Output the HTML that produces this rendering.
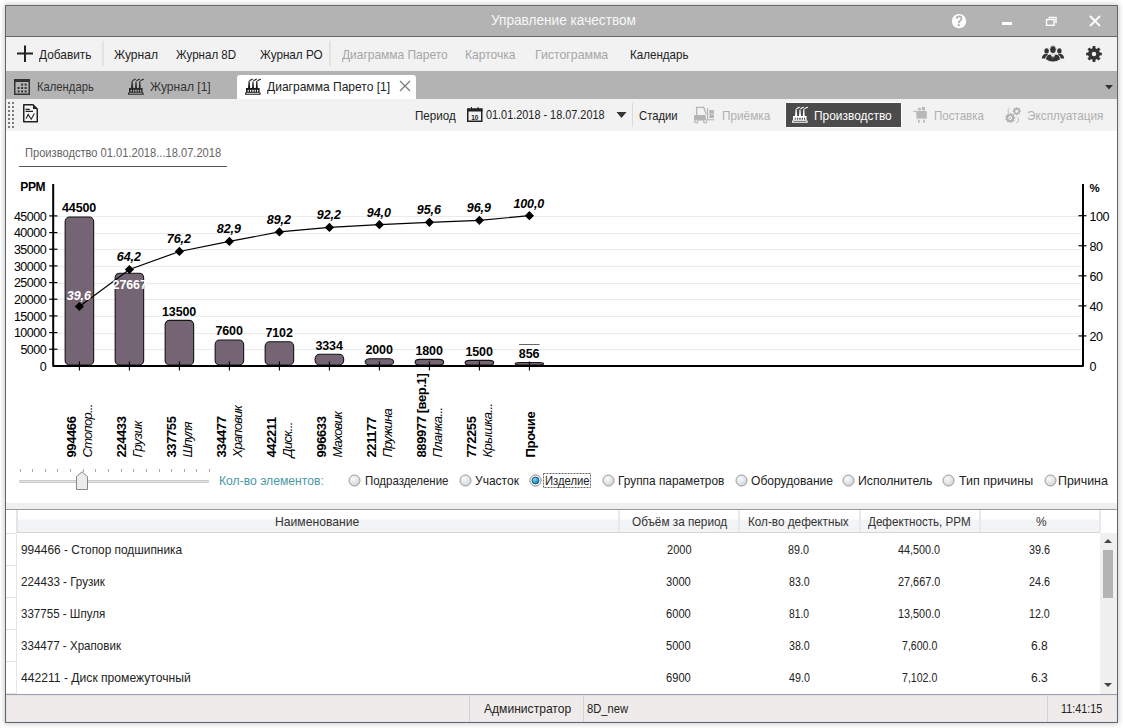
<!DOCTYPE html>
<html><head><meta charset="utf-8"><title>Управление качеством</title>
<style>
html,body{margin:0;padding:0;width:1123px;height:728px;overflow:hidden;background:#fff;position:relative}
body{font-family:"Liberation Sans",sans-serif}
.t{position:absolute;white-space:nowrap}
</style></head><body>
<div style="position:absolute;left:5px;top:5px;width:1113px;height:718px;box-shadow:0 0 5px 1px rgba(0,0,0,0.2);background:#fff;box-sizing:border-box;border:1px solid #666"></div>
<div style="position:absolute;left:6px;top:6px;width:1111px;height:30px;background:#b3b3b3"></div>
<div style="position:absolute;left:6px;top:36px;width:1111px;height:1px;background:#666"></div>
<div style="position:absolute;left:6px;top:37px;width:1111px;height:34px;background:#f2f2f2"></div>
<div style="position:absolute;left:101.5px;top:41px;width:2px;height:25px;background:#e3e3e3"></div>
<div style="position:absolute;left:328.5px;top:41px;width:2px;height:25px;background:#e3e3e3"></div>
<div style="position:absolute;left:6px;top:71px;width:1111px;height:28px;background:#b3b3b3"></div>
<div style="position:absolute;left:237px;top:75px;width:179px;height:24px;background:#fff;border-radius:3px 3px 0 0"></div>
<div style="position:absolute;left:6px;top:99px;width:1111px;height:32px;background:#f2f2f2"></div>
<div style="position:absolute;left:632px;top:103px;width:1px;height:24px;background:#dadada"></div>
<div style="position:absolute;left:786px;top:103px;width:115px;height:24px;background:#4b4b4b;box-shadow:0 0 0 1px #fdfdfd"></div>
<div style="position:absolute;left:8px;top:102px;width:2px;height:2px;background:#7a7a7a"></div><div style="position:absolute;left:12px;top:102px;width:2px;height:2px;background:#7a7a7a"></div><div style="position:absolute;left:8px;top:106px;width:2px;height:2px;background:#7a7a7a"></div><div style="position:absolute;left:12px;top:106px;width:2px;height:2px;background:#7a7a7a"></div><div style="position:absolute;left:8px;top:110px;width:2px;height:2px;background:#7a7a7a"></div><div style="position:absolute;left:12px;top:110px;width:2px;height:2px;background:#7a7a7a"></div><div style="position:absolute;left:8px;top:114px;width:2px;height:2px;background:#7a7a7a"></div><div style="position:absolute;left:12px;top:114px;width:2px;height:2px;background:#7a7a7a"></div><div style="position:absolute;left:8px;top:118px;width:2px;height:2px;background:#7a7a7a"></div><div style="position:absolute;left:12px;top:118px;width:2px;height:2px;background:#7a7a7a"></div><div style="position:absolute;left:8px;top:122px;width:2px;height:2px;background:#7a7a7a"></div><div style="position:absolute;left:12px;top:122px;width:2px;height:2px;background:#7a7a7a"></div><div style="position:absolute;left:8px;top:126px;width:2px;height:2px;background:#7a7a7a"></div><div style="position:absolute;left:12px;top:126px;width:2px;height:2px;background:#7a7a7a"></div>
<div style="position:absolute;left:19px;top:166px;width:208px;height:1px;background:#555"></div>
<div style="position:absolute;left:6px;top:503px;width:1111px;height:6px;background:#efefef"></div>
<div style="position:absolute;left:6px;top:509px;width:1111px;height:1px;background:#999"></div>
<div style="position:absolute;left:17px;top:510px;width:1083px;height:22px;background:linear-gradient(#ffffff 0,#ffffff 9px,#f3f4f6 10px,#f3f4f6 100%)"></div>
<div style="position:absolute;left:6px;top:532px;width:1094px;height:1px;background:#d5d5d5"></div>
<div style="position:absolute;left:17px;top:510px;width:1px;height:22px;background:#e3e3e3"></div>
<div style="position:absolute;left:618px;top:510px;width:2px;height:22px;background:#e9e9e9"></div>
<div style="position:absolute;left:738px;top:510px;width:2px;height:22px;background:#e9e9e9"></div>
<div style="position:absolute;left:859px;top:510px;width:2px;height:22px;background:#e9e9e9"></div>
<div style="position:absolute;left:979px;top:510px;width:2px;height:22px;background:#e9e9e9"></div>
<div style="position:absolute;left:1099px;top:510px;width:2px;height:22px;background:#e9e9e9"></div>
<div style="position:absolute;left:6px;top:510px;width:11px;height:184px;background:#fff"></div>
<div style="position:absolute;left:16px;top:510px;width:1px;height:184px;background:#e6e6e6"></div>
<div style="position:absolute;left:6px;top:533px;width:10px;height:1px;background:#e2e2e2"></div>
<div style="position:absolute;left:6px;top:565px;width:10px;height:1px;background:#e2e2e2"></div>
<div style="position:absolute;left:6px;top:597px;width:10px;height:1px;background:#e2e2e2"></div>
<div style="position:absolute;left:6px;top:629px;width:10px;height:1px;background:#e2e2e2"></div>
<div style="position:absolute;left:6px;top:661px;width:10px;height:1px;background:#e2e2e2"></div>
<div style="position:absolute;left:6px;top:693px;width:10px;height:1px;background:#e2e2e2"></div>
<div style="position:absolute;left:1100px;top:533px;width:17px;height:161px;background:#f0f0f0"></div>
<div style="position:absolute;left:1103px;top:550px;width:10px;height:48px;background:#b4b4b4"></div>
<svg style="position:absolute;left:1103px;top:538px" width="10" height="6"><path d="M1 5 L5 1 L9 5Z" fill="#444"/></svg>
<svg style="position:absolute;left:1103px;top:682px" width="10" height="6"><path d="M1 1 L5 5 L9 1Z" fill="#444"/></svg>
<div style="position:absolute;left:6px;top:694px;width:1111px;height:1px;background:#a0a0a0"></div>
<div style="position:absolute;left:6px;top:695px;width:1111px;height:27px;background:#efebea;box-shadow:inset 0 0 0 1px #dfe5f0"></div>
<div style="position:absolute;left:469px;top:695px;width:1px;height:27px;background:#d3d3de"></div>
<div style="position:absolute;left:583px;top:695px;width:1px;height:27px;background:#d3d3de"></div>
<div style="position:absolute;left:1047px;top:695px;width:1px;height:27px;background:#d3d3de"></div>
<div style="position:absolute;left:19px;top:480px;width:190px;height:3px;background:#e6e6e6;border-radius:2px;box-shadow:inset 0 0 0 1px #c9c9c9"></div>
<div style="position:absolute;left:20px;top:469px;width:1px;height:3px;background:#a8a8a8"></div>
<div style="position:absolute;left:32px;top:469px;width:1px;height:3px;background:#a8a8a8"></div>
<div style="position:absolute;left:45px;top:469px;width:1px;height:3px;background:#a8a8a8"></div>
<div style="position:absolute;left:57px;top:469px;width:1px;height:3px;background:#a8a8a8"></div>
<div style="position:absolute;left:70px;top:469px;width:1px;height:3px;background:#a8a8a8"></div>
<div style="position:absolute;left:83px;top:469px;width:1px;height:3px;background:#a8a8a8"></div>
<div style="position:absolute;left:95px;top:469px;width:1px;height:3px;background:#a8a8a8"></div>
<div style="position:absolute;left:108px;top:469px;width:1px;height:3px;background:#a8a8a8"></div>
<div style="position:absolute;left:121px;top:469px;width:1px;height:3px;background:#a8a8a8"></div>
<div style="position:absolute;left:133px;top:469px;width:1px;height:3px;background:#a8a8a8"></div>
<div style="position:absolute;left:146px;top:469px;width:1px;height:3px;background:#a8a8a8"></div>
<div style="position:absolute;left:159px;top:469px;width:1px;height:3px;background:#a8a8a8"></div>
<div style="position:absolute;left:171px;top:469px;width:1px;height:3px;background:#a8a8a8"></div>
<div style="position:absolute;left:184px;top:469px;width:1px;height:3px;background:#a8a8a8"></div>
<div style="position:absolute;left:196px;top:469px;width:1px;height:3px;background:#a8a8a8"></div>
<div style="position:absolute;left:209px;top:469px;width:1px;height:3px;background:#a8a8a8"></div>
<svg style="position:absolute;left:76px;top:471px" width="12" height="20"><path d="M0.5 5.5 L6 0.8 L11.5 5.5 V18.5 H0.5Z" fill="#ececec" stroke="#888" stroke-width="1"/></svg>
<svg style="position:absolute;left:348px;top:473.7px" width="13" height="13"><defs><radialGradient id="rg0" cx="0.4" cy="0.35" r="0.7"><stop offset="0" stop-color="#fafafa"/><stop offset="1" stop-color="#cfd3d8"/></radialGradient></defs><circle cx="6.5" cy="6.5" r="5.5" fill="url(#rg0)" stroke="#9a9a9a" stroke-width="1"/></svg>
<svg style="position:absolute;left:459px;top:473.7px" width="13" height="13"><defs><radialGradient id="rg1" cx="0.4" cy="0.35" r="0.7"><stop offset="0" stop-color="#fafafa"/><stop offset="1" stop-color="#cfd3d8"/></radialGradient></defs><circle cx="6.5" cy="6.5" r="5.5" fill="url(#rg1)" stroke="#9a9a9a" stroke-width="1"/></svg>
<svg style="position:absolute;left:529px;top:473.7px" width="13" height="13"><defs><radialGradient id="rg2" cx="0.4" cy="0.35" r="0.7"><stop offset="0" stop-color="#fafafa"/><stop offset="1" stop-color="#cfd3d8"/></radialGradient></defs><circle cx="6.5" cy="6.5" r="5.5" fill="url(#rg2)" stroke="#9a9a9a" stroke-width="1"/><defs><radialGradient id="sg" cx="0.35" cy="0.3" r="0.8"><stop offset="0" stop-color="#8fe0f5"/><stop offset="0.45" stop-color="#38b0e0"/><stop offset="1" stop-color="#1476b8"/></radialGradient></defs><circle cx="6.5" cy="6.5" r="5.5" fill="#fafafa" stroke="#9a9a9a" stroke-width="1"/><circle cx="6.5" cy="6.5" r="3.4" fill="url(#sg)" stroke="#1d4f7c" stroke-width="1"/></svg>
<svg style="position:absolute;left:602px;top:473.7px" width="13" height="13"><defs><radialGradient id="rg3" cx="0.4" cy="0.35" r="0.7"><stop offset="0" stop-color="#fafafa"/><stop offset="1" stop-color="#cfd3d8"/></radialGradient></defs><circle cx="6.5" cy="6.5" r="5.5" fill="url(#rg3)" stroke="#9a9a9a" stroke-width="1"/></svg>
<svg style="position:absolute;left:735px;top:473.7px" width="13" height="13"><defs><radialGradient id="rg4" cx="0.4" cy="0.35" r="0.7"><stop offset="0" stop-color="#fafafa"/><stop offset="1" stop-color="#cfd3d8"/></radialGradient></defs><circle cx="6.5" cy="6.5" r="5.5" fill="url(#rg4)" stroke="#9a9a9a" stroke-width="1"/></svg>
<svg style="position:absolute;left:842px;top:473.7px" width="13" height="13"><defs><radialGradient id="rg5" cx="0.4" cy="0.35" r="0.7"><stop offset="0" stop-color="#fafafa"/><stop offset="1" stop-color="#cfd3d8"/></radialGradient></defs><circle cx="6.5" cy="6.5" r="5.5" fill="url(#rg5)" stroke="#9a9a9a" stroke-width="1"/></svg>
<svg style="position:absolute;left:942px;top:473.7px" width="13" height="13"><defs><radialGradient id="rg6" cx="0.4" cy="0.35" r="0.7"><stop offset="0" stop-color="#fafafa"/><stop offset="1" stop-color="#cfd3d8"/></radialGradient></defs><circle cx="6.5" cy="6.5" r="5.5" fill="url(#rg6)" stroke="#9a9a9a" stroke-width="1"/></svg>
<svg style="position:absolute;left:1044px;top:473.7px" width="13" height="13"><defs><radialGradient id="rg7" cx="0.4" cy="0.35" r="0.7"><stop offset="0" stop-color="#fafafa"/><stop offset="1" stop-color="#cfd3d8"/></radialGradient></defs><circle cx="6.5" cy="6.5" r="5.5" fill="url(#rg7)" stroke="#9a9a9a" stroke-width="1"/></svg>
<svg style="position:absolute;left:542px;top:472px" width="51" height="17"><rect x="1.5" y="1.5" width="47" height="14" fill="none" stroke="#666" stroke-width="1" stroke-dasharray="2 1"/></svg>
<svg style="position:absolute;left:950px;top:13px" width="18" height="17"><circle cx="9" cy="8.1" r="7.2" fill="#fff"/><path d="M6.8 5.6 Q6.9 3.4 9.2 3.4 Q11.5 3.4 11.5 5.6 Q11.5 7.1 9.7 8.1 Q8.8 8.7 8.8 10.3" fill="none" stroke="#b3b3b3" stroke-width="1.9"/><circle cx="8.8" cy="12.2" r="1.15" fill="#b3b3b3"/></svg>
<div style="position:absolute;left:1002px;top:22px;width:10px;height:3px;background:#fff"></div>
<svg style="position:absolute;left:1044px;top:15px" width="14" height="12"><rect x="2.5" y="4.5" width="7.5" height="5.8" fill="none" stroke="#fff" stroke-width="1.4"/><path d="M4.5 2.5 H12 V8.3" fill="none" stroke="#fff" stroke-width="1.4"/></svg>
<svg style="position:absolute;left:1088px;top:14px" width="14" height="14"><path d="M2 2 L12 12 M12 2 L2 12" stroke="#fff" stroke-width="1.9"/></svg>
<svg style="position:absolute;left:16px;top:45px" width="18" height="18"><path d="M1 8.5H17M9 0.5V17" stroke="#222" stroke-width="2"/></svg>
<svg style="position:absolute;left:1040px;top:44px" width="26" height="19" viewBox="0 0 26 19">
<ellipse cx="6.6" cy="6.9" rx="2.2" ry="2.7" fill="#333"/><ellipse cx="19.4" cy="6.9" rx="2.2" ry="2.7" fill="#333"/>
<path d="M1.8 14.6 Q2.2 10.6 5 10.1 L8 10.1 Q9.5 10.4 9.3 12 L8.5 14.6Z" fill="#333"/>
<path d="M24.2 14.6 Q23.8 10.6 21 10.1 L18 10.1 Q16.5 10.4 16.7 12 L17.5 14.6Z" fill="#333"/>
<path d="M5.6 15.6 Q5.8 10.8 9.5 10.2 L16.5 10.2 Q20.2 10.8 20.4 15.6 Q13 20.6 5.6 15.6Z" fill="#333" stroke="#f2f2f2" stroke-width="0.9"/>
<ellipse cx="13" cy="5.6" rx="3.3" ry="4" fill="#333" stroke="#f2f2f2" stroke-width="0.9"/>
<path d="M10.8 10.6 L15.2 10.6 L13 15.6Z" fill="#f2f2f2"/><path d="M12.5 12.2 L13.5 12.2 L13.9 15.2 L13 16.4 L12.1 15.2Z" fill="#333"/></svg>
<svg style="position:absolute;left:1085px;top:45px" width="18" height="18"><polygon points="14.57,7.52 16.88,7.65 16.88,10.35 14.57,10.48 13.98,11.89 15.53,13.62 13.62,15.53 11.89,13.98 10.48,14.57 10.35,16.88 7.65,16.88 7.52,14.57 6.11,13.98 4.38,15.53 2.47,13.62 4.02,11.89 3.43,10.48 1.12,10.35 1.12,7.65 3.43,7.52 4.02,6.11 2.47,4.38 4.38,2.47 6.11,4.02 7.52,3.43 7.65,1.12 10.35,1.12 10.48,3.43 11.89,4.02 13.62,2.47 15.53,4.38 13.98,6.11" fill="#333"/><circle cx="9.0" cy="9.0" r="5.76" fill="#333"/><circle cx="9.0" cy="9.0" r="2.24" fill="#f2f2f2"/></svg>
<svg style="position:absolute;left:14px;top:79px" width="16" height="16"><rect x="0.75" y="0.75" width="14.5" height="14.5" fill="none" stroke="#333" stroke-width="1.5"/><rect x="0" y="0" width="16" height="3" fill="#333"/><rect x="7.1" y="4.6" width="2" height="2" fill="#333"/><rect x="10.6" y="4.6" width="2" height="2" fill="#333"/><rect x="3.6" y="8.0" width="2" height="2" fill="#333"/><rect x="7.1" y="8.0" width="2" height="2" fill="#333"/><rect x="10.6" y="8.0" width="2" height="2" fill="#333"/><rect x="3.6" y="11.4" width="2" height="2" fill="#333"/><rect x="7.1" y="11.4" width="2" height="2" fill="#333"/><rect x="10.6" y="11.4" width="2" height="2" fill="#333"/></svg>
<svg style="position:absolute;left:126.2px;top:76px" width="20" height="21" viewBox="0 0 20 21">
<path d="M6.8 4.6 L9.3 3.2 M10.8 4.6 L13.3 3.2 M14.8 4.6 L17.5 3.2" stroke="#2a2a2a" stroke-width="1.1" stroke-linecap="round"/>
<path d="M5.6 5 L6.6 5 L7.2 12.2 L5 12.2Z M9.5 5.5 L10.5 5.5 L11 12.2 L9 12.2Z M13.3 5 L14.3 5 L14.8 12.2 L12.8 12.2Z" fill="#2a2a2a"/>
<rect x="3" y="12" width="13.6" height="4.6" fill="#2a2a2a"/><rect x="4.6" y="13.8" width="1.2" height="1.9" fill="#b3b3b3"/><rect x="7" y="13.8" width="1.2" height="1.9" fill="#b3b3b3"/><rect x="9.2" y="13.8" width="1.5" height="1.9" fill="#b3b3b3"/><rect x="11.7" y="13.8" width="1.2" height="1.9" fill="#b3b3b3"/><rect x="14" y="13.8" width="1.2" height="1.9" fill="#b3b3b3"/>
<rect x="2" y="16.4" width="15.7" height="2.4" rx="0.6" fill="#2a2a2a"/><rect x="3.3" y="17.2" width="13.1" height="0.7" fill="#b3b3b3"/></svg>
<svg style="position:absolute;left:243px;top:76px" width="20" height="21" viewBox="0 0 20 21">
<path d="M6.8 4.6 L9.3 3.2 M10.8 4.6 L13.3 3.2 M14.8 4.6 L17.5 3.2" stroke="#1a1a1a" stroke-width="1.1" stroke-linecap="round"/>
<path d="M5.6 5 L6.6 5 L7.2 12.2 L5 12.2Z M9.5 5.5 L10.5 5.5 L11 12.2 L9 12.2Z M13.3 5 L14.3 5 L14.8 12.2 L12.8 12.2Z" fill="#1a1a1a"/>
<rect x="3" y="12" width="13.6" height="4.6" fill="#1a1a1a"/><rect x="4.6" y="13.8" width="1.2" height="1.9" fill="#ffffff"/><rect x="7" y="13.8" width="1.2" height="1.9" fill="#ffffff"/><rect x="9.2" y="13.8" width="1.5" height="1.9" fill="#ffffff"/><rect x="11.7" y="13.8" width="1.2" height="1.9" fill="#ffffff"/><rect x="14" y="13.8" width="1.2" height="1.9" fill="#ffffff"/>
<rect x="2" y="16.4" width="15.7" height="2.4" rx="0.6" fill="#1a1a1a"/><rect x="3.3" y="17.2" width="13.1" height="0.7" fill="#ffffff"/></svg>
<svg style="position:absolute;left:399px;top:80px" width="12" height="12"><path d="M1 1 L11 11 M11 1 L1 11" stroke="#777" stroke-width="1.2"/></svg>
<svg style="position:absolute;left:1104px;top:84px" width="10" height="6"><path d="M1 1 L9 1 L5 5.5Z" fill="#333"/></svg>
<svg style="position:absolute;left:23px;top:104px" width="16" height="19" viewBox="0 0 16 19">
<path d="M0.75 0.75 H10 L14.25 5 V17.75 H0.75Z" fill="#f6f6f6" stroke="#222" stroke-width="1.5" stroke-linejoin="round"/>
<path d="M10 0.75 L14.25 5 H10Z" fill="#222"/>
<path d="M2.5 5.3 H6.8 M2.5 7.4 H10" stroke="#222" stroke-width="1.2"/>
<path d="M3.2 14.6 L5.2 10.4 L8.2 15.2 L11.4 9.4" fill="none" stroke="#222" stroke-width="1.1"/></svg>
<svg style="position:absolute;left:467px;top:107px" width="16" height="15" viewBox="0 0 16 15">
<rect x="0.75" y="2.25" width="14" height="12" fill="none" stroke="#222" stroke-width="1.5"/><rect x="0" y="1.5" width="15.5" height="3" fill="#222"/>
<rect x="4" y="0" width="1" height="3" fill="#222"/><rect x="10.5" y="0" width="1" height="3" fill="#222"/>
<text x="7.8" y="12.6" text-anchor="middle" style="font-family:'Liberation Sans';font-size:6.5px;font-weight:bold" fill="#222">10</text></svg>
<svg style="position:absolute;left:616px;top:111px" width="11" height="8"><path d="M0.5 1 L10.5 1 L5.5 7Z" fill="#333"/></svg>
<svg style="position:absolute;left:692px;top:104px" width="24" height="20" viewBox="0 0 24 20">
<path d="M4.6 11 V3.4 H11.7 L14.3 10.5" fill="none" stroke="#b4b4b4" stroke-width="1.3"/>
<path d="M2 12 Q2 11 3 11 H12 L14 11.8 V16.5 H2Z" fill="#b4b4b4"/>
<rect x="15" y="4" width="1.1" height="11.8" fill="#b4b4b4"/><rect x="15.5" y="15.3" width="7" height="1" fill="#b4b4b4"/>
<rect x="17.3" y="6" width="4.5" height="3.8" fill="#b4b4b4"/><rect x="17.3" y="10.3" width="4.5" height="3.8" fill="#b4b4b4"/>
<circle cx="4.4" cy="17.3" r="1.7" fill="#f2f2f2" stroke="#b4b4b4" stroke-width="1.1"/><circle cx="13.3" cy="17.3" r="1.7" fill="#f2f2f2" stroke="#b4b4b4" stroke-width="1.1"/></svg>
<svg style="position:absolute;left:789.9px;top:103.5px" width="20" height="21" viewBox="0 0 20 21">
<path d="M6.8 4.6 L9.3 3.2 M10.8 4.6 L13.3 3.2 M14.8 4.6 L17.5 3.2" stroke="#ffffff" stroke-width="1.1" stroke-linecap="round"/>
<path d="M5.6 5 L6.6 5 L7.2 12.2 L5 12.2Z M9.5 5.5 L10.5 5.5 L11 12.2 L9 12.2Z M13.3 5 L14.3 5 L14.8 12.2 L12.8 12.2Z" fill="#ffffff"/>
<rect x="3" y="12" width="13.6" height="4.6" fill="#ffffff"/><rect x="4.6" y="13.8" width="1.2" height="1.9" fill="#4b4b4b"/><rect x="7" y="13.8" width="1.2" height="1.9" fill="#4b4b4b"/><rect x="9.2" y="13.8" width="1.5" height="1.9" fill="#4b4b4b"/><rect x="11.7" y="13.8" width="1.2" height="1.9" fill="#4b4b4b"/><rect x="14" y="13.8" width="1.2" height="1.9" fill="#4b4b4b"/>
<rect x="2" y="16.4" width="15.7" height="2.4" rx="0.6" fill="#ffffff"/><rect x="3.3" y="17.2" width="13.1" height="0.7" fill="#4b4b4b"/></svg>
<svg style="position:absolute;left:908px;top:102px" width="24" height="24" viewBox="0 0 24 24">
<path d="M5 9.3 H8.6 L9.6 16.6" fill="none" stroke="#b8b8b8" stroke-width="1.1"/>
<rect x="8.6" y="9" width="10.2" height="7.6" fill="#b8b8b8"/>
<circle cx="11.5" cy="7" r="1.6" fill="#b8b8b8"/><rect x="14" y="5" width="3" height="3.5" fill="#b8b8b8"/>
<rect x="10" y="17.8" width="1.7" height="3" fill="#b8b8b8"/><rect x="15" y="17.8" width="1.7" height="3" fill="#b8b8b8"/></svg>
<svg style="position:absolute;left:1000px;top:102px" width="24" height="24" viewBox="0 0 24 24">
<polygon points="13.99,15.07 15.23,15.19 15.23,16.81 13.99,16.93 13.70,17.72 14.58,18.61 13.53,19.86 12.51,19.15 11.77,19.57 11.87,20.82 10.27,21.10 9.94,19.89 9.11,19.74 8.39,20.77 6.98,19.95 7.50,18.82 6.96,18.17 5.75,18.49 5.19,16.96 6.32,16.42 6.32,15.58 5.19,15.04 5.75,13.51 6.96,13.83 7.50,13.18 6.98,12.05 8.39,11.23 9.11,12.26 9.94,12.11 10.27,10.90 11.87,11.18 11.77,12.43 12.51,12.85 13.53,12.14 14.58,13.39 13.70,14.28" fill="#b4b4b4"/><circle cx="10.2" cy="16" r="3.9" fill="#b4b4b4"/><circle cx="10.2" cy="16" r="1.9" fill="#f2f2f2"/><circle cx="10.2" cy="16" r="0.8" fill="#b4b4b4"/>
<polygon points="19.69,8.37 20.73,8.47 20.73,9.93 19.69,10.03 19.40,10.73 20.07,11.53 19.03,12.57 18.23,11.90 17.53,12.19 17.43,13.23 15.97,13.23 15.87,12.19 15.17,11.90 14.37,12.57 13.33,11.53 14.00,10.73 13.71,10.03 12.67,9.93 12.67,8.47 13.71,8.37 14.00,7.67 13.33,6.87 14.37,5.83 15.17,6.50 15.87,6.21 15.97,5.17 17.43,5.17 17.53,6.21 18.23,6.50 19.03,5.83 20.07,6.87 19.40,7.67" fill="#b4b4b4"/><circle cx="16.7" cy="9.2" r="3.1" fill="#b4b4b4"/><circle cx="16.7" cy="9.2" r="1.5" fill="#f2f2f2"/>
<path d="M9.6 5.8 A3 3 0 0 0 9.4 11" fill="none" stroke="#b4b4b4" stroke-width="0.9"/><path d="M17.5 15.2 A3.5 3.5 0 0 1 16.3 21" fill="none" stroke="#b4b4b4" stroke-width="0.9"/></svg>
<svg width="1123" height="728" style="position:absolute;left:0;top:0">
<line x1="55" x2="1082" y1="349.5" y2="349.5" stroke="#ebebeb" stroke-width="1"/>
<line x1="55" x2="1082" y1="333.5" y2="333.5" stroke="#ebebeb" stroke-width="1"/>
<line x1="55" x2="1082" y1="316.5" y2="316.5" stroke="#ebebeb" stroke-width="1"/>
<line x1="55" x2="1082" y1="299.5" y2="299.5" stroke="#ebebeb" stroke-width="1"/>
<line x1="55" x2="1082" y1="283.5" y2="283.5" stroke="#ebebeb" stroke-width="1"/>
<line x1="55" x2="1082" y1="266.5" y2="266.5" stroke="#ebebeb" stroke-width="1"/>
<line x1="55" x2="1082" y1="249.5" y2="249.5" stroke="#ebebeb" stroke-width="1"/>
<line x1="55" x2="1082" y1="233.5" y2="233.5" stroke="#ebebeb" stroke-width="1"/>
<line x1="55" x2="1082" y1="216.5" y2="216.5" stroke="#ebebeb" stroke-width="1"/>
<rect x="65.15" y="217.07" width="28.5" height="147.93" rx="4.50" ry="4.50" fill="#756474" stroke="#141414" stroke-width="1.1"/>
<rect x="115.15" y="273.18" width="28.5" height="91.82" rx="4.50" ry="4.50" fill="#756474" stroke="#141414" stroke-width="1.1"/>
<rect x="165.15" y="320.40" width="28.5" height="44.60" rx="4.50" ry="4.50" fill="#756474" stroke="#141414" stroke-width="1.1"/>
<rect x="215.15" y="340.07" width="28.5" height="24.93" rx="4.50" ry="4.50" fill="#756474" stroke="#141414" stroke-width="1.1"/>
<rect x="265.15" y="341.73" width="28.5" height="23.27" rx="4.50" ry="4.50" fill="#756474" stroke="#141414" stroke-width="1.1"/>
<rect x="315.15" y="354.29" width="28.5" height="10.71" rx="4.50" ry="4.50" fill="#756474" stroke="#141414" stroke-width="1.1"/>
<rect x="365.15" y="358.73" width="28.5" height="6.27" rx="4.50" ry="3.13" fill="#756474" stroke="#141414" stroke-width="1.1"/>
<rect x="415.15" y="359.40" width="28.5" height="5.60" rx="4.50" ry="2.80" fill="#756474" stroke="#141414" stroke-width="1.1"/>
<rect x="465.15" y="360.40" width="28.5" height="4.60" rx="4.50" ry="2.30" fill="#756474" stroke="#141414" stroke-width="1.1"/>
<rect x="515.15" y="362.55" width="28.5" height="2.45" rx="4.50" ry="1.23" fill="#756474" stroke="#141414" stroke-width="1.1"/>
<path d="M53.2 184 V366 H1083 V184" fill="none" stroke="#000" stroke-width="2" stroke-linejoin="round"/>
<line x1="49.2" x2="57.4" y1="349.23" y2="349.23" stroke="#000" stroke-width="1.2"/>
<line x1="49.2" x2="57.4" y1="332.57" y2="332.57" stroke="#000" stroke-width="1.2"/>
<line x1="49.2" x2="57.4" y1="315.90" y2="315.90" stroke="#000" stroke-width="1.2"/>
<line x1="49.2" x2="57.4" y1="299.23" y2="299.23" stroke="#000" stroke-width="1.2"/>
<line x1="49.2" x2="57.4" y1="282.57" y2="282.57" stroke="#000" stroke-width="1.2"/>
<line x1="49.2" x2="57.4" y1="265.90" y2="265.90" stroke="#000" stroke-width="1.2"/>
<line x1="49.2" x2="57.4" y1="249.23" y2="249.23" stroke="#000" stroke-width="1.2"/>
<line x1="49.2" x2="57.4" y1="232.57" y2="232.57" stroke="#000" stroke-width="1.2"/>
<line x1="49.2" x2="57.4" y1="215.90" y2="215.90" stroke="#000" stroke-width="1.2"/>
<line x1="1078.5" x2="1086.5" y1="335.94" y2="335.94" stroke="#000" stroke-width="1.2"/>
<line x1="1078.5" x2="1086.5" y1="305.88" y2="305.88" stroke="#000" stroke-width="1.2"/>
<line x1="1078.5" x2="1086.5" y1="275.82" y2="275.82" stroke="#000" stroke-width="1.2"/>
<line x1="1078.5" x2="1086.5" y1="245.76" y2="245.76" stroke="#000" stroke-width="1.2"/>
<line x1="1078.5" x2="1086.5" y1="215.70" y2="215.70" stroke="#000" stroke-width="1.2"/>
<line x1="79.4" x2="79.4" y1="361.5" y2="370.5" stroke="#000" stroke-width="1.1"/>
<line x1="129.4" x2="129.4" y1="361.5" y2="370.5" stroke="#000" stroke-width="1.1"/>
<line x1="179.4" x2="179.4" y1="361.5" y2="370.5" stroke="#000" stroke-width="1.1"/>
<line x1="229.4" x2="229.4" y1="361.5" y2="370.5" stroke="#000" stroke-width="1.1"/>
<line x1="279.4" x2="279.4" y1="361.5" y2="370.5" stroke="#000" stroke-width="1.1"/>
<line x1="329.4" x2="329.4" y1="361.5" y2="370.5" stroke="#000" stroke-width="1.1"/>
<line x1="379.4" x2="379.4" y1="361.5" y2="370.5" stroke="#000" stroke-width="1.1"/>
<line x1="429.4" x2="429.4" y1="361.5" y2="370.5" stroke="#000" stroke-width="1.1"/>
<line x1="479.4" x2="479.4" y1="361.5" y2="370.5" stroke="#000" stroke-width="1.1"/>
<line x1="529.4" x2="529.4" y1="361.5" y2="370.5" stroke="#000" stroke-width="1.1"/>
<text x="46.2" y="370.5" text-anchor="end" style="font-family:'Liberation Sans',sans-serif;font-size:12.5px;letter-spacing:-0.5px" fill="#000">0</text>
<text x="46.2" y="353.8" text-anchor="end" style="font-family:'Liberation Sans',sans-serif;font-size:12.5px;letter-spacing:-0.5px" fill="#000">5000</text>
<text x="46.2" y="337.2" text-anchor="end" style="font-family:'Liberation Sans',sans-serif;font-size:12.5px;letter-spacing:-0.5px" fill="#000">10000</text>
<text x="46.2" y="320.5" text-anchor="end" style="font-family:'Liberation Sans',sans-serif;font-size:12.5px;letter-spacing:-0.5px" fill="#000">15000</text>
<text x="46.2" y="303.8" text-anchor="end" style="font-family:'Liberation Sans',sans-serif;font-size:12.5px;letter-spacing:-0.5px" fill="#000">20000</text>
<text x="46.2" y="287.2" text-anchor="end" style="font-family:'Liberation Sans',sans-serif;font-size:12.5px;letter-spacing:-0.5px" fill="#000">25000</text>
<text x="46.2" y="270.5" text-anchor="end" style="font-family:'Liberation Sans',sans-serif;font-size:12.5px;letter-spacing:-0.5px" fill="#000">30000</text>
<text x="46.2" y="253.8" text-anchor="end" style="font-family:'Liberation Sans',sans-serif;font-size:12.5px;letter-spacing:-0.5px" fill="#000">35000</text>
<text x="46.2" y="237.2" text-anchor="end" style="font-family:'Liberation Sans',sans-serif;font-size:12.5px;letter-spacing:-0.5px" fill="#000">40000</text>
<text x="46.2" y="220.5" text-anchor="end" style="font-family:'Liberation Sans',sans-serif;font-size:12.5px;letter-spacing:-0.5px" fill="#000">45000</text>
<text x="1089.5" y="371.3" style="font-family:'Liberation Sans',sans-serif;font-size:12.5px;letter-spacing:-0.5px" fill="#000">0</text>
<text x="1089.5" y="341.2" style="font-family:'Liberation Sans',sans-serif;font-size:12.5px;letter-spacing:-0.5px" fill="#000">20</text>
<text x="1089.5" y="311.2" style="font-family:'Liberation Sans',sans-serif;font-size:12.5px;letter-spacing:-0.5px" fill="#000">40</text>
<text x="1089.5" y="281.1" style="font-family:'Liberation Sans',sans-serif;font-size:12.5px;letter-spacing:-0.5px" fill="#000">60</text>
<text x="1089.5" y="251.1" style="font-family:'Liberation Sans',sans-serif;font-size:12.5px;letter-spacing:-0.5px" fill="#000">80</text>
<text x="1089.5" y="221.0" style="font-family:'Liberation Sans',sans-serif;font-size:12.5px;letter-spacing:-0.5px" fill="#000">100</text>
<text x="20.3" y="190.8" style="font-family:'Liberation Sans',sans-serif;font-size:12px;font-weight:bold;letter-spacing:-0.4px" fill="#000">PPM</text>
<text x="1089.5" y="192.3" style="font-family:'Liberation Sans',sans-serif;font-size:11.5px;font-weight:bold;letter-spacing:-0.3px" fill="#000">%</text>
<polyline points="79.4,306.48 129.4,269.51 179.4,251.47 229.4,241.40 279.4,231.93 329.4,227.42 379.4,224.72 429.4,222.31 479.4,220.36 529.4,215.70" fill="none" stroke="#000" stroke-width="1.2"/>
<path d="M79.40 301.88 L84.00 306.48 L79.40 311.08 L74.80 306.48Z" fill="#000"/>
<path d="M129.40 264.91 L134.00 269.51 L129.40 274.11 L124.80 269.51Z" fill="#000"/>
<path d="M179.40 246.87 L184.00 251.47 L179.40 256.07 L174.80 251.47Z" fill="#000"/>
<path d="M229.40 236.80 L234.00 241.40 L229.40 246.00 L224.80 241.40Z" fill="#000"/>
<path d="M279.40 227.33 L284.00 231.93 L279.40 236.53 L274.80 231.93Z" fill="#000"/>
<path d="M329.40 222.82 L334.00 227.42 L329.40 232.02 L324.80 227.42Z" fill="#000"/>
<path d="M379.40 220.12 L384.00 224.72 L379.40 229.32 L374.80 224.72Z" fill="#000"/>
<path d="M429.40 217.71 L434.00 222.31 L429.40 226.91 L424.80 222.31Z" fill="#000"/>
<path d="M479.40 215.76 L484.00 220.36 L479.40 224.96 L474.80 220.36Z" fill="#000"/>
<path d="M529.40 211.10 L534.00 215.70 L529.40 220.30 L524.80 215.70Z" fill="#000"/>
<text x="79.1" y="212.4" text-anchor="middle" style="font-family:'Liberation Sans',sans-serif;font-size:12.5px;font-weight:bold;letter-spacing:-0.1px" fill="#000">44500</text>
<text x="129.7" y="289.2" text-anchor="middle" style="font-family:'Liberation Sans',sans-serif;font-size:12.5px;font-weight:bold;letter-spacing:-0.1px" fill="#fff">27667</text>
<text x="179.1" y="315.7" text-anchor="middle" style="font-family:'Liberation Sans',sans-serif;font-size:12.5px;font-weight:bold;letter-spacing:-0.1px" fill="#000">13500</text>
<text x="229.1" y="335.4" text-anchor="middle" style="font-family:'Liberation Sans',sans-serif;font-size:12.5px;font-weight:bold;letter-spacing:-0.1px" fill="#000">7600</text>
<text x="279.1" y="337.0" text-anchor="middle" style="font-family:'Liberation Sans',sans-serif;font-size:12.5px;font-weight:bold;letter-spacing:-0.1px" fill="#000">7102</text>
<text x="329.1" y="349.6" text-anchor="middle" style="font-family:'Liberation Sans',sans-serif;font-size:12.5px;font-weight:bold;letter-spacing:-0.1px" fill="#000">3334</text>
<text x="379.1" y="354.0" text-anchor="middle" style="font-family:'Liberation Sans',sans-serif;font-size:12.5px;font-weight:bold;letter-spacing:-0.1px" fill="#000">2000</text>
<text x="429.1" y="354.7" text-anchor="middle" style="font-family:'Liberation Sans',sans-serif;font-size:12.5px;font-weight:bold;letter-spacing:-0.1px" fill="#000">1800</text>
<text x="479.1" y="355.7" text-anchor="middle" style="font-family:'Liberation Sans',sans-serif;font-size:12.5px;font-weight:bold;letter-spacing:-0.1px" fill="#000">1500</text>
<text x="529.1" y="357.8" text-anchor="middle" style="font-family:'Liberation Sans',sans-serif;font-size:12.5px;font-weight:bold;letter-spacing:-0.1px" fill="#000">856</text>
<line x1="519" x2="539.5" y1="344.5" y2="344.5" stroke="#555" stroke-width="0.9"/>
<text x="78.8" y="299.9" text-anchor="middle" style="font-family:'Liberation Sans',sans-serif;font-size:12.5px;font-weight:bold;font-style:italic;letter-spacing:-0.1px" fill="#fff">39,6</text>
<text x="128.8" y="261.3" text-anchor="middle" style="font-family:'Liberation Sans',sans-serif;font-size:12.5px;font-weight:bold;font-style:italic;letter-spacing:-0.1px" fill="#000">64,2</text>
<text x="178.8" y="243.3" text-anchor="middle" style="font-family:'Liberation Sans',sans-serif;font-size:12.5px;font-weight:bold;font-style:italic;letter-spacing:-0.1px" fill="#000">76,2</text>
<text x="228.8" y="233.2" text-anchor="middle" style="font-family:'Liberation Sans',sans-serif;font-size:12.5px;font-weight:bold;font-style:italic;letter-spacing:-0.1px" fill="#000">82,9</text>
<text x="278.8" y="223.7" text-anchor="middle" style="font-family:'Liberation Sans',sans-serif;font-size:12.5px;font-weight:bold;font-style:italic;letter-spacing:-0.1px" fill="#000">89,2</text>
<text x="328.8" y="219.2" text-anchor="middle" style="font-family:'Liberation Sans',sans-serif;font-size:12.5px;font-weight:bold;font-style:italic;letter-spacing:-0.1px" fill="#000">92,2</text>
<text x="378.8" y="216.5" text-anchor="middle" style="font-family:'Liberation Sans',sans-serif;font-size:12.5px;font-weight:bold;font-style:italic;letter-spacing:-0.1px" fill="#000">94,0</text>
<text x="428.8" y="214.1" text-anchor="middle" style="font-family:'Liberation Sans',sans-serif;font-size:12.5px;font-weight:bold;font-style:italic;letter-spacing:-0.1px" fill="#000">95,6</text>
<text x="478.8" y="212.2" text-anchor="middle" style="font-family:'Liberation Sans',sans-serif;font-size:12.5px;font-weight:bold;font-style:italic;letter-spacing:-0.1px" fill="#000">96,9</text>
<text x="528.8" y="207.5" text-anchor="middle" style="font-family:'Liberation Sans',sans-serif;font-size:12.5px;font-weight:bold;font-style:italic;letter-spacing:-0.1px" fill="#000">100,0</text>
<text transform="translate(76.1,457.5) rotate(-90)" style="font-family:'Liberation Sans',sans-serif;font-size:13px;font-weight:bold;letter-spacing:-0.4px" fill="#000">994466</text>
<text transform="translate(92.2,457.5) rotate(-90)" style="font-family:'Liberation Sans',sans-serif;font-size:13px;font-style:italic;letter-spacing:-0.74px" fill="#000">Стопор...</text>
<text transform="translate(126.1,457.5) rotate(-90)" style="font-family:'Liberation Sans',sans-serif;font-size:13px;font-weight:bold;letter-spacing:-0.4px" fill="#000">224433</text>
<text transform="translate(142.2,457.5) rotate(-90)" style="font-family:'Liberation Sans',sans-serif;font-size:13px;font-style:italic;letter-spacing:-0.47px" fill="#000">Грузик</text>
<text transform="translate(176.1,457.5) rotate(-90)" style="font-family:'Liberation Sans',sans-serif;font-size:13px;font-weight:bold;letter-spacing:-0.4px" fill="#000">337755</text>
<text transform="translate(192.2,457.5) rotate(-90)" style="font-family:'Liberation Sans',sans-serif;font-size:13px;font-style:italic;letter-spacing:-0.95px" fill="#000">Шпуля</text>
<text transform="translate(226.1,457.5) rotate(-90)" style="font-family:'Liberation Sans',sans-serif;font-size:13px;font-weight:bold;letter-spacing:-0.4px" fill="#000">334477</text>
<text transform="translate(242.2,457.5) rotate(-90)" style="font-family:'Liberation Sans',sans-serif;font-size:13px;font-style:italic;letter-spacing:-0.74px" fill="#000">Храповик</text>
<text transform="translate(276.1,457.5) rotate(-90)" style="font-family:'Liberation Sans',sans-serif;font-size:13px;font-weight:bold;letter-spacing:-0.4px" fill="#000">442211</text>
<text transform="translate(292.2,457.5) rotate(-90)" style="font-family:'Liberation Sans',sans-serif;font-size:13px;font-style:italic;letter-spacing:-0.68px" fill="#000">Диск...</text>
<text transform="translate(326.1,457.5) rotate(-90)" style="font-family:'Liberation Sans',sans-serif;font-size:13px;font-weight:bold;letter-spacing:-0.4px" fill="#000">996633</text>
<text transform="translate(342.2,457.5) rotate(-90)" style="font-family:'Liberation Sans',sans-serif;font-size:13px;font-style:italic;letter-spacing:-0.93px" fill="#000">Маховик</text>
<text transform="translate(376.1,457.5) rotate(-90)" style="font-family:'Liberation Sans',sans-serif;font-size:13px;font-weight:bold;letter-spacing:-0.4px" fill="#000">221177</text>
<text transform="translate(392.2,457.5) rotate(-90)" style="font-family:'Liberation Sans',sans-serif;font-size:13px;font-style:italic;letter-spacing:-0.68px" fill="#000">Пружина</text>
<text transform="translate(426.1,457.5) rotate(-90)" style="font-family:'Liberation Sans',sans-serif;font-size:13px;font-weight:bold;letter-spacing:-0.4px" fill="#000">889977 [вер.1]</text>
<text transform="translate(442.2,457.5) rotate(-90)" style="font-family:'Liberation Sans',sans-serif;font-size:13px;font-style:italic;letter-spacing:-0.58px" fill="#000">Планка...</text>
<text transform="translate(476.1,457.5) rotate(-90)" style="font-family:'Liberation Sans',sans-serif;font-size:13px;font-weight:bold;letter-spacing:-0.4px" fill="#000">772255</text>
<text transform="translate(492.2,457.5) rotate(-90)" style="font-family:'Liberation Sans',sans-serif;font-size:13px;font-style:italic;letter-spacing:-0.61px" fill="#000">Крышка...</text>
<text transform="translate(534.6,457.5) rotate(-90)" style="font-family:'Liberation Sans',sans-serif;font-size:13px;font-weight:bold;letter-spacing:-0.3px" fill="#000">Прочие</text>
</svg>
<div class="t" style="left:490.70px;top:12.75px;font-size:14.5px;line-height:14.5px;transform:scaleX(0.9403);transform-origin:0 0;letter-spacing:0.000px;color:#f7f7f7;font-weight:normal;font-style:normal" id="title">Управление качеством</div>
<div class="t" style="left:39.00px;top:48.00px;font-size:13px;line-height:13px;transform:scaleX(0.9123);transform-origin:0 0;letter-spacing:0.000px;color:#222;font-weight:normal;font-style:normal" id="tb0">Добавить</div>
<div class="t" style="left:114.20px;top:48.00px;font-size:13px;line-height:13px;transform:scaleX(0.9255);transform-origin:0 0;letter-spacing:0.000px;color:#222;font-weight:normal;font-style:normal" id="tb1">Журнал</div>
<div class="t" style="left:176.20px;top:48.00px;font-size:13px;line-height:13px;transform:scaleX(0.8884);transform-origin:0 0;letter-spacing:0.000px;color:#222;font-weight:normal;font-style:normal" id="tb2">Журнал 8D</div>
<div class="t" style="left:259.50px;top:48.00px;font-size:13px;line-height:13px;transform:scaleX(0.9002);transform-origin:0 0;letter-spacing:0.000px;color:#222;font-weight:normal;font-style:normal" id="tb3">Журнал РО</div>
<div class="t" style="left:341.90px;top:48.00px;font-size:13px;line-height:13px;transform:scaleX(0.9200);transform-origin:0 0;letter-spacing:0.000px;color:#a6a6a6;font-weight:normal;font-style:normal" id="tb4">Диаграмма Парето</div>
<div class="t" style="left:465.00px;top:48.00px;font-size:13px;line-height:13px;transform:scaleX(0.9259);transform-origin:0 0;letter-spacing:0.000px;color:#a6a6a6;font-weight:normal;font-style:normal" id="tb5">Карточка</div>
<div class="t" style="left:534.50px;top:48.00px;font-size:13px;line-height:13px;transform:scaleX(0.9456);transform-origin:0 0;letter-spacing:0.000px;color:#a6a6a6;font-weight:normal;font-style:normal" id="tb6">Гистограмма</div>
<div class="t" style="left:630.00px;top:48.00px;font-size:13px;line-height:13px;transform:scaleX(0.8909);transform-origin:0 0;letter-spacing:0.000px;color:#222;font-weight:normal;font-style:normal" id="tb7">Календарь</div>
<div class="t" style="left:36.60px;top:80.00px;font-size:13px;line-height:13px;transform:scaleX(0.8648);transform-origin:0 0;letter-spacing:0.000px;color:#333;font-weight:normal;font-style:normal" id="tab0">Календарь</div>
<div class="t" style="left:149.60px;top:80.00px;font-size:13px;line-height:13px;transform:scaleX(0.9263);transform-origin:0 0;letter-spacing:0.000px;color:#333;font-weight:normal;font-style:normal" id="tab1">Журнал [1]</div>
<div class="t" style="left:267.10px;top:80.00px;font-size:13px;line-height:13px;transform:scaleX(0.9264);transform-origin:0 0;letter-spacing:0.000px;color:#222;font-weight:normal;font-style:normal" id="tab2">Диаграмма Парето [1]</div>
<div class="t" style="left:415.20px;top:109.00px;font-size:13px;line-height:13px;transform:scaleX(0.8940);transform-origin:0 0;letter-spacing:0.000px;color:#222;font-weight:normal;font-style:normal" id="st0">Период</div>
<div class="t" style="left:485.90px;top:108.00px;font-size:13px;line-height:13px;transform:scaleX(0.8369);transform-origin:0 0;letter-spacing:0.000px;color:#222;font-weight:normal;font-style:normal" id="st1">01.01.2018 - 18.07.2018</div>
<div class="t" style="left:639.10px;top:109.00px;font-size:13px;line-height:13px;transform:scaleX(0.8684);transform-origin:0 0;letter-spacing:0.000px;color:#222;font-weight:normal;font-style:normal" id="st2">Стадии</div>
<div class="t" style="left:721.50px;top:109.00px;font-size:13px;line-height:13px;transform:scaleX(0.9060);transform-origin:0 0;letter-spacing:0.000px;color:#b0b0b0;font-weight:normal;font-style:normal" id="st3">Приёмка</div>
<div class="t" style="left:814.00px;top:109.00px;font-size:13px;line-height:13px;transform:scaleX(0.9168);transform-origin:0 0;letter-spacing:0.000px;color:#ffffff;font-weight:normal;font-style:normal" id="st4">Производство</div>
<div class="t" style="left:933.50px;top:109.00px;font-size:13px;line-height:13px;transform:scaleX(0.8895);transform-origin:0 0;letter-spacing:0.000px;color:#b0b0b0;font-weight:normal;font-style:normal" id="st5">Поставка</div>
<div class="t" style="left:1027.00px;top:109.00px;font-size:13px;line-height:13px;transform:scaleX(0.9061);transform-origin:0 0;letter-spacing:0.000px;color:#b0b0b0;font-weight:normal;font-style:normal" id="st6">Эксплуатация</div>
<div class="t" style="left:25.00px;top:146.00px;font-size:13px;line-height:13px;transform:scaleX(0.8553);transform-origin:0 0;letter-spacing:0.000px;color:#666;font-weight:normal;font-style:normal" id="ct">Производство 01.01.2018...18.07.2018</div>
<div class="t" style="left:218.80px;top:474.00px;font-size:13px;line-height:13px;transform:scaleX(0.9352);transform-origin:0 0;letter-spacing:0.000px;color:#4a99a2;font-weight:normal;font-style:normal" id="rd0">Кол-во элементов:</div>
<div class="t" style="left:364.90px;top:474.00px;font-size:13px;line-height:13px;transform:scaleX(0.8809);transform-origin:0 0;letter-spacing:0.000px;color:#222;font-weight:normal;font-style:normal" id="rd1">Подразделение</div>
<div class="t" style="left:474.60px;top:474.00px;font-size:13px;line-height:13px;transform:scaleX(0.9244);transform-origin:0 0;letter-spacing:0.000px;color:#222;font-weight:normal;font-style:normal" id="rd2">Участок</div>
<div class="t" style="left:545.20px;top:474.00px;font-size:13px;line-height:13px;transform:scaleX(0.8668);transform-origin:0 0;letter-spacing:0.000px;color:#222;font-weight:normal;font-style:normal" id="rd3">Изделие</div>
<div class="t" style="left:617.90px;top:474.00px;font-size:13px;line-height:13px;transform:scaleX(0.9121);transform-origin:0 0;letter-spacing:0.000px;color:#222;font-weight:normal;font-style:normal" id="rd4">Группа параметров</div>
<div class="t" style="left:751.00px;top:474.00px;font-size:13px;line-height:13px;transform:scaleX(0.9274);transform-origin:0 0;letter-spacing:0.000px;color:#222;font-weight:normal;font-style:normal" id="rd5">Оборудование</div>
<div class="t" style="left:857.80px;top:474.00px;font-size:13px;line-height:13px;transform:scaleX(0.9436);transform-origin:0 0;letter-spacing:0.000px;color:#222;font-weight:normal;font-style:normal" id="rd6">Исполнитель</div>
<div class="t" style="left:958.80px;top:474.00px;font-size:13px;line-height:13px;transform:scaleX(0.9585);transform-origin:0 0;letter-spacing:0.000px;color:#222;font-weight:normal;font-style:normal" id="rd7">Тип причины</div>
<div class="t" style="left:1058.10px;top:474.00px;font-size:13px;line-height:13px;transform:scaleX(0.9539);transform-origin:0 0;letter-spacing:0.000px;color:#222;font-weight:normal;font-style:normal" id="rd8">Причина</div>
<div class="t" style="left:275.00px;top:515.00px;font-size:13px;line-height:13px;transform:scaleX(0.9349);transform-origin:0 0;letter-spacing:0.000px;color:#333;font-weight:normal;font-style:normal" id="th0">Наименование</div>
<div class="t" style="left:631.90px;top:515.00px;font-size:13px;line-height:13px;transform:scaleX(0.9048);transform-origin:0 0;letter-spacing:0.000px;color:#333;font-weight:normal;font-style:normal" id="th1">Объём за период</div>
<div class="t" style="left:748.00px;top:515.00px;font-size:13px;line-height:13px;transform:scaleX(0.9028);transform-origin:0 0;letter-spacing:0.000px;color:#333;font-weight:normal;font-style:normal" id="th2">Кол-во дефектных</div>
<div class="t" style="left:867.60px;top:515.00px;font-size:13px;line-height:13px;transform:scaleX(0.8957);transform-origin:0 0;letter-spacing:0.000px;color:#333;font-weight:normal;font-style:normal" id="th3">Дефектность, PPM</div>
<div class="t" style="left:1035.50px;top:515.00px;font-size:13px;line-height:13px;transform:scaleX(0.9153);transform-origin:0 0;letter-spacing:0.000px;color:#333;font-weight:normal;font-style:normal" id="th4">%</div>
<div class="t" style="left:483.90px;top:702.00px;font-size:13px;line-height:13px;transform:scaleX(0.9299);transform-origin:0 0;letter-spacing:0.000px;color:#222;font-weight:normal;font-style:normal" id="sb0">Администратор</div>
<div class="t" style="left:586.90px;top:702.00px;font-size:13px;line-height:13px;transform:scaleX(0.8626);transform-origin:0 0;letter-spacing:0.000px;color:#222;font-weight:normal;font-style:normal" id="sb1">8D_new</div>
<div class="t" style="left:1060.80px;top:702.00px;font-size:13px;line-height:13px;transform:scaleX(0.8291);transform-origin:0 0;letter-spacing:0.000px;color:#222;font-weight:normal;font-style:normal" id="sb2">11:41:15</div>
<div class="t" style="left:20.60px;top:543.00px;font-size:13px;line-height:13px;transform:scaleX(0.9130);transform-origin:0 0;letter-spacing:0.000px;color:#222;font-weight:normal;font-style:normal" id="rn0">994466 - Стопор подшипника</div>
<div class="t" style="left:666.60px;top:543.00px;font-size:13px;line-height:13px;transform:scaleX(0.8499);transform-origin:0 0;letter-spacing:0.000px;color:#222;font-weight:normal;font-style:normal" id="rv00">2000</div>
<div class="t" style="left:788.10px;top:543.00px;font-size:13px;line-height:13px;transform:scaleX(0.8257);transform-origin:0 0;letter-spacing:0.000px;color:#222;font-weight:normal;font-style:normal" id="rv01">89.0</div>
<div class="t" style="left:898.00px;top:543.00px;font-size:13px;line-height:13px;transform:scaleX(0.8322);transform-origin:0 0;letter-spacing:0.000px;color:#222;font-weight:normal;font-style:normal" id="rv02">44,500.0</div>
<div class="t" style="left:1029.10px;top:543.00px;font-size:13px;line-height:13px;transform:scaleX(0.8334);transform-origin:0 0;letter-spacing:0.000px;color:#222;font-weight:normal;font-style:normal" id="rv03">39.6</div>
<div class="t" style="left:20.60px;top:575.00px;font-size:13px;line-height:13px;transform:scaleX(0.8958);transform-origin:0 0;letter-spacing:0.000px;color:#222;font-weight:normal;font-style:normal" id="rn1">224433 - Грузик</div>
<div class="t" style="left:666.40px;top:575.00px;font-size:13px;line-height:13px;transform:scaleX(0.8560);transform-origin:0 0;letter-spacing:0.000px;color:#222;font-weight:normal;font-style:normal" id="rv10">3000</div>
<div class="t" style="left:788.50px;top:575.00px;font-size:13px;line-height:13px;transform:scaleX(0.8163);transform-origin:0 0;letter-spacing:0.000px;color:#222;font-weight:normal;font-style:normal" id="rv11">83.0</div>
<div class="t" style="left:898.00px;top:575.00px;font-size:13px;line-height:13px;transform:scaleX(0.8363);transform-origin:0 0;letter-spacing:0.000px;color:#222;font-weight:normal;font-style:normal" id="rv12">27,667.0</div>
<div class="t" style="left:1029.30px;top:575.00px;font-size:13px;line-height:13px;transform:scaleX(0.8252);transform-origin:0 0;letter-spacing:0.000px;color:#222;font-weight:normal;font-style:normal" id="rv13">24.6</div>
<div class="t" style="left:20.60px;top:607.00px;font-size:13px;line-height:13px;transform:scaleX(0.8894);transform-origin:0 0;letter-spacing:0.000px;color:#222;font-weight:normal;font-style:normal" id="rn2">337755 - Шпуля</div>
<div class="t" style="left:666.40px;top:607.00px;font-size:13px;line-height:13px;transform:scaleX(0.8560);transform-origin:0 0;letter-spacing:0.000px;color:#222;font-weight:normal;font-style:normal" id="rv20">6000</div>
<div class="t" style="left:789.20px;top:607.00px;font-size:13px;line-height:13px;transform:scaleX(0.7928);transform-origin:0 0;letter-spacing:0.000px;color:#222;font-weight:normal;font-style:normal" id="rv21">81.0</div>
<div class="t" style="left:898.00px;top:607.00px;font-size:13px;line-height:13px;transform:scaleX(0.8340);transform-origin:0 0;letter-spacing:0.000px;color:#222;font-weight:normal;font-style:normal" id="rv22">13,500.0</div>
<div class="t" style="left:1029.30px;top:607.00px;font-size:13px;line-height:13px;transform:scaleX(0.8205);transform-origin:0 0;letter-spacing:0.000px;color:#222;font-weight:normal;font-style:normal" id="rv23">12.0</div>
<div class="t" style="left:20.60px;top:639.00px;font-size:13px;line-height:13px;transform:scaleX(0.8911);transform-origin:0 0;letter-spacing:0.000px;color:#222;font-weight:normal;font-style:normal" id="rn3">334477 - Храповик</div>
<div class="t" style="left:666.40px;top:639.00px;font-size:13px;line-height:13px;transform:scaleX(0.8511);transform-origin:0 0;letter-spacing:0.000px;color:#222;font-weight:normal;font-style:normal" id="rv30">5000</div>
<div class="t" style="left:788.50px;top:639.00px;font-size:13px;line-height:13px;transform:scaleX(0.8163);transform-origin:0 0;letter-spacing:0.000px;color:#222;font-weight:normal;font-style:normal" id="rv31">38.0</div>
<div class="t" style="left:901.60px;top:639.00px;font-size:13px;line-height:13px;transform:scaleX(0.8144);transform-origin:0 0;letter-spacing:0.000px;color:#222;font-weight:normal;font-style:normal" id="rv32">7,600.0</div>
<div class="t" style="left:1030.60px;top:639.00px;font-size:13px;line-height:13px;transform:scaleX(0.9264);transform-origin:0 0;letter-spacing:0.000px;color:#222;font-weight:normal;font-style:normal" id="rv33">6.8</div>
<div class="t" style="left:20.60px;top:671.00px;font-size:13px;line-height:13px;transform:scaleX(0.9326);transform-origin:0 0;letter-spacing:0.000px;color:#222;font-weight:normal;font-style:normal" id="rn4">442211 - Диск промежуточный</div>
<div class="t" style="left:666.40px;top:671.00px;font-size:13px;line-height:13px;transform:scaleX(0.8560);transform-origin:0 0;letter-spacing:0.000px;color:#222;font-weight:normal;font-style:normal" id="rv40">6900</div>
<div class="t" style="left:788.50px;top:671.00px;font-size:13px;line-height:13px;transform:scaleX(0.8241);transform-origin:0 0;letter-spacing:0.000px;color:#222;font-weight:normal;font-style:normal" id="rv41">49.0</div>
<div class="t" style="left:901.60px;top:671.00px;font-size:13px;line-height:13px;transform:scaleX(0.8144);transform-origin:0 0;letter-spacing:0.000px;color:#222;font-weight:normal;font-style:normal" id="rv42">7,102.0</div>
<div class="t" style="left:1030.60px;top:671.00px;font-size:13px;line-height:13px;transform:scaleX(0.9264);transform-origin:0 0;letter-spacing:0.000px;color:#222;font-weight:normal;font-style:normal" id="rv43">6.3</div>
</body></html>
